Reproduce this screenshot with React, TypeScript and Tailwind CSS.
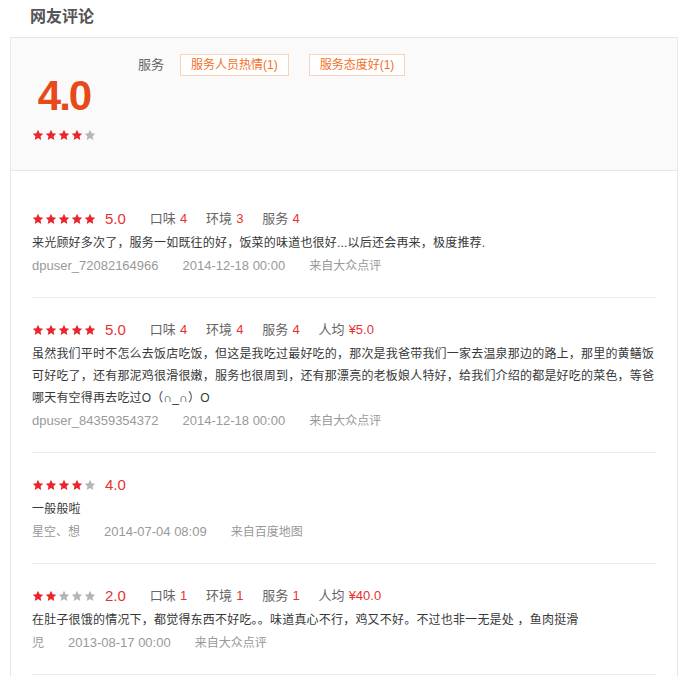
import React from 'react';

const FONT = "font-['Liberation_Sans','Noto_Sans_CJK_SC',sans-serif]";

type Review = {
  score: number;
  scores?: { taste: number; env: number; service: number };
  price?: string;
  lines: string[];
  user: string;
  userCjk?: boolean;
  time: string;
  source: string;
};

const REVIEWS: Review[] = [
  {
    score: 5,
    scores: { taste: 4, env: 3, service: 4 },
    lines: ['来光顾好多次了，服务一如既往的好，饭菜的味道也很好...以后还会再来，极度推荐.'],
    user: 'dpuser_72082164966',
    time: '2014-12-18 00:00',
    source: '来自大众点评',
  },
  {
    score: 5,
    scores: { taste: 4, env: 4, service: 4 },
    price: '¥5.0',
    lines: [
      '虽然我们平时不怎么去饭店吃饭，但这是我吃过最好吃的，那次是我爸带我们一家去温泉那边的路上，那里的黄鳝饭',
      '可好吃了，还有那泥鸡很滑很嫩，服务也很周到，还有那漂亮的老板娘人特好，给我们介绍的都是好吃的菜色，等爸',
      '哪天有空得再去吃过O（∩_∩）O',
    ],
    user: 'dpuser_84359354372',
    time: '2014-12-18 00:00',
    source: '来自大众点评',
  },
  {
    score: 4,
    lines: ['一般般啦'],
    user: '星空、想',
    userCjk: true,
    time: '2014-07-04 08:09',
    source: '来自百度地图',
  },
  {
    score: 2,
    scores: { taste: 1, env: 1, service: 1 },
    price: '¥40.0',
    lines: ['在肚子很饿的情况下，都觉得东西不好吃。。味道真心不行，鸡又不好。不过也非一无是处 ，鱼肉挺滑'],
    user: '児',
    userCjk: true,
    time: '2013-08-17 00:00',
    source: '来自大众点评',
  },
];

function Star({ on }: { on: boolean }) {
  return (
    <svg width="12" height="12" viewBox="0 0 24 24" className="shrink-0">
      <path
        d="M12 1.5l3.2 6.9 7.3.9-5.4 5.1 1.4 7.4L12 18.1l-6.5 3.7 1.4-7.4L1.5 9.3l7.3-.9z"
        fill={on ? '#e8262b' : '#b5b5b5'}
      />
    </svg>
  );
}

function Stars({ n }: { n: number }) {
  return (
    <div className="flex items-center gap-[1px]">
      {[0, 1, 2, 3, 4].map((i) => (
        <Star key={i} on={i < n} />
      ))}
    </div>
  );
}

function Score({ label, value }: { label: string; value: string | number }) {
  return (
    <span className="mr-[19px] flex items-center text-[13px]">
      <span className="text-[#666]">{label}</span>
      <span className="ml-[4px] text-[#e8312f]">{value}</span>
    </span>
  );
}

function ReviewItem({ r }: { r: Review }) {
  return (
    <div className="mx-[21px] border-b border-[#ebebeb] pt-[20px] pb-[20px]">
      <div className="flex h-6 items-center">
        <Stars n={r.score} />
        <span className="ml-[9px] mr-[24px] text-[15px] text-[#e8312f]">{r.score.toFixed(1)}</span>
        {r.scores && (
          <>
            <Score label="口味" value={r.scores.taste} />
            <Score label="环境" value={r.scores.env} />
            <Score label="服务" value={r.scores.service} />
          </>
        )}
        {r.price && <Score label="人均" value={r.price} />}
      </div>
      <div className="pt-[1px] text-[12px] leading-[22px] tracking-[0.2px] text-[#383838]">
        {r.lines.map((l, i) => (
          <div key={i} className="whitespace-nowrap">
            {l}
          </div>
        ))}
      </div>
      <div className="mt-[1px] flex h-[22px] items-center gap-6 text-[#999]">
        <span className={r.userCjk ? 'text-[12px]' : 'text-[13px]'}>{r.user}</span>
        <span className="text-[13px]">{r.time}</span>
        <span className="text-[12px]">{r.source}</span>
      </div>
    </div>
  );
}

export default function App() {
  return (
    <div className={`min-h-screen bg-white ${FONT}`}>
      <div className="pt-[7px] pb-[10px] pl-[30px] text-[16px] font-bold leading-[20px] text-[#555]">
        网友评论
      </div>

      <div className="mx-[10px] border border-[#e6e6e6]">
        {/* summary */}
        <div className="flex h-[133px] items-start border-b border-[#e6e6e6] bg-[#fafafa] px-[21px] pt-4">
          <div className="flex w-16 flex-col items-center">
            <div className="mt-[21px] text-[42px] font-bold leading-none tracking-[-2px] text-[#e64a19]">4.0</div>
            <div className="mt-[12px]">
              <Stars n={4} />
            </div>
          </div>
          <div className="ml-[42px] flex h-[22px] items-center">
            <span className="text-[13px] text-[#666]">服务</span>
            <span className="ml-4 flex h-[22px] items-center border border-[#f9d2b8] bg-white px-[10px] text-[12px] text-[#f2702b]">
              服务人员热情(1)
            </span>
            <span className="ml-5 flex h-[22px] items-center border border-[#f9d2b8] bg-white px-[10px] text-[12px] text-[#f2702b]">
              服务态度好(1)
            </span>
          </div>
        </div>

        {/* reviews */}
        <div className="pt-[16px] pb-5">
          {REVIEWS.map((r, i) => (
            <ReviewItem key={i} r={r} />
          ))}
        </div>
      </div>
    </div>
  );
}
